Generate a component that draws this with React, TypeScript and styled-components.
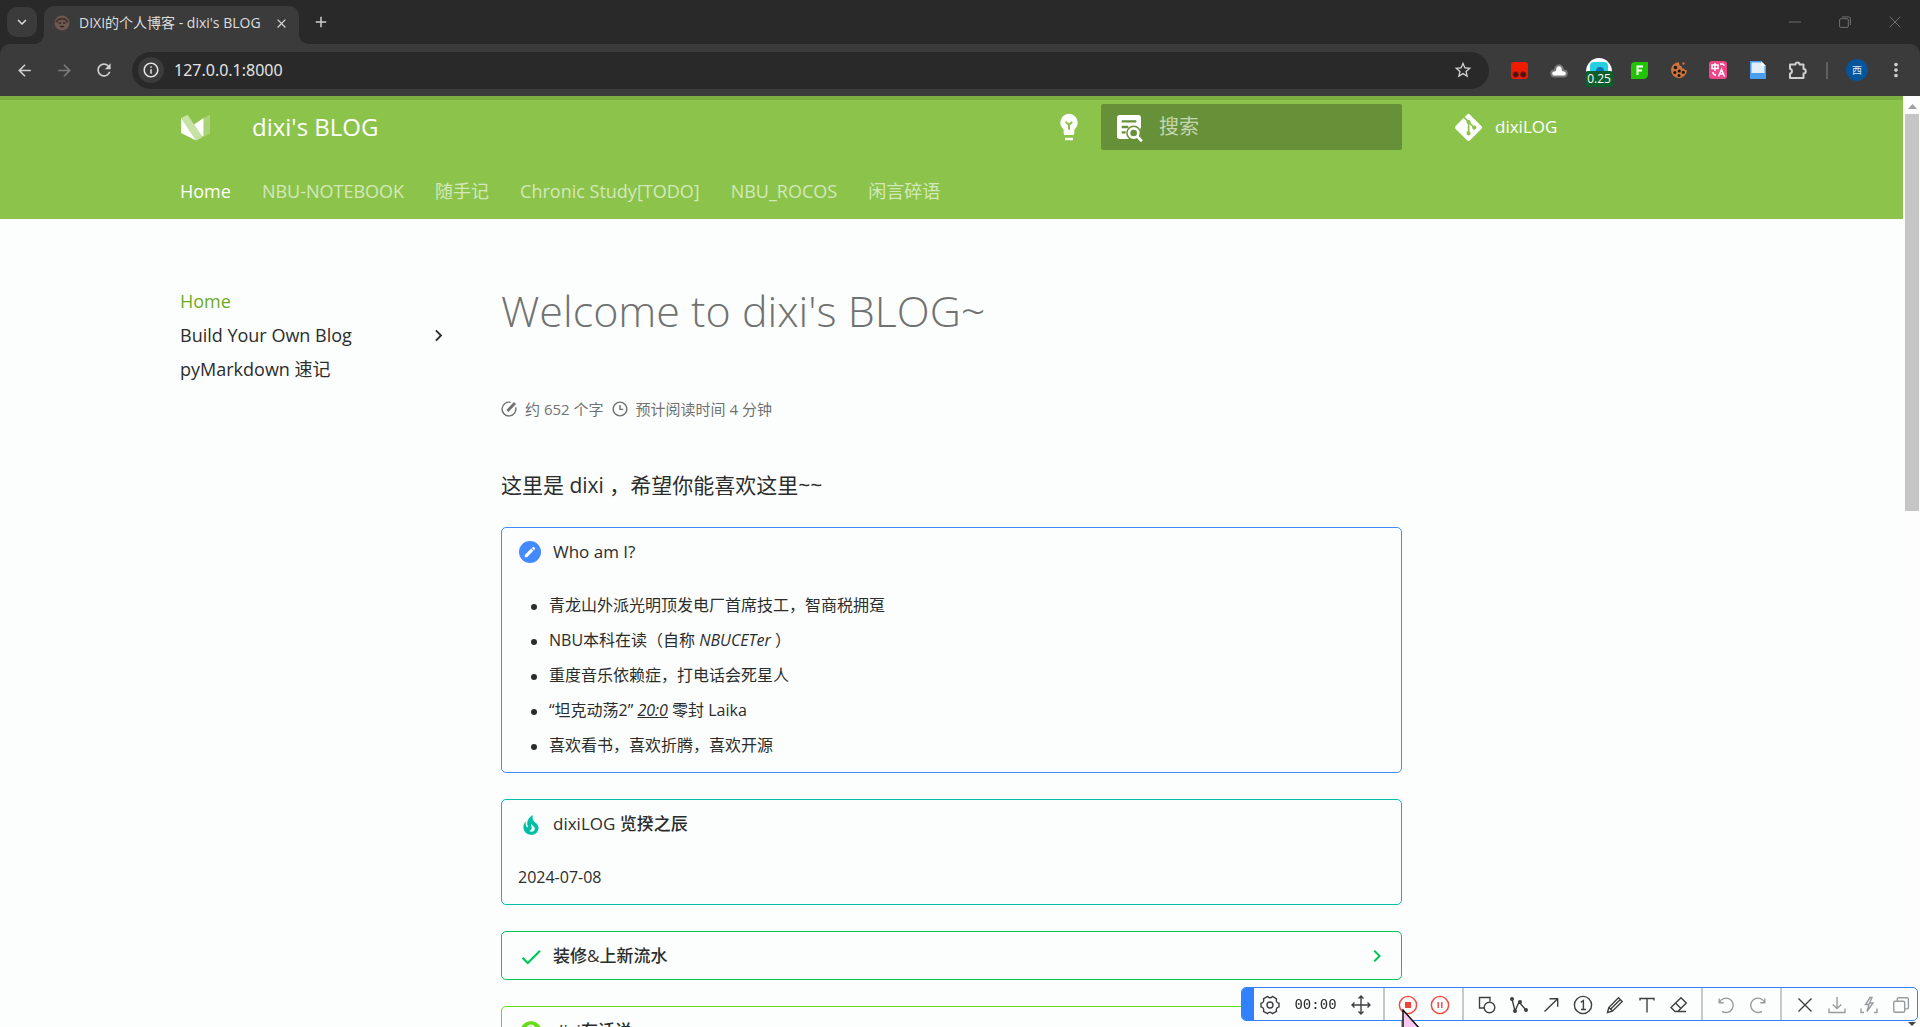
import React from "react";
import styled, { createGlobalStyle } from "styled-components";
import {
  MdArrowBack, MdArrowForward, MdRefresh, MdStarBorder, MdClose, MdAdd, MdExpandMore,
  MdMoreVert, MdChevronRight, MdEdit, MdCheck, MdHelp, MdInfoOutline,
} from "react-icons/md";
import { FaGitAlt } from "react-icons/fa";

const GlobalStyle = createGlobalStyle`
  *, *::before, *::after { box-sizing: border-box; }
  html, body, #root { height: 100%; }
  body {
    margin: 0;
    overflow: hidden;
    background: #fcfefd;
    color: #2b2d2c;
    font-family: "Open Sans", "Noto Sans CJK SC", sans-serif;
    font-size: 16px;
  }
  button, input { font: inherit; color: inherit; border: 0; padding: 0; background: none; }
  a { color: inherit; text-decoration: none; }
  ul, h1, h2, p { margin: 0; padding: 0; font-weight: inherit; }
  svg { display: block; flex: none; }
`;

const Window = styled.div`
  height: 100vh;
  display: flex;
  flex-direction: column;
`;

/* ---------- browser frame ---------- */

const Frame = styled.div`
  flex: none;
  background: #292929;
`;

const TabStrip = styled.div`
  height: 44px;
  display: flex;
  align-items: flex-end;
  padding-left: 7px;
  color: #dedede;
`;

const TabSearch = styled.button`
  width: 30px;
  height: 30px;
  margin-bottom: 7px;
  border-radius: 10px;
  background: #3b3b3b;
  display: grid;
  place-items: center;
`;

const Tab = styled.div`
  position: relative;
  width: 255px;
  height: 38px;
  margin-left: 7px;
  padding: 0 9px 4px 10px;
  border-radius: 10px 10px 0 0;
  background: #3b3b3b;
  display: flex;
  align-items: center;
  gap: 9px;
  &::before, &::after {
    content: "";
    position: absolute;
    bottom: 0;
    width: 10px;
    height: 10px;
  }
  &::before {
    right: 100%;
    background: radial-gradient(circle at 0 0, transparent 10px, #3b3b3b 10px);
  }
  &::after {
    left: 100%;
    background: radial-gradient(circle at 100% 0, transparent 10px, #3b3b3b 10px);
  }
`;

const TabTitle = styled.span`
  flex: 1;
  font-size: 14px;
  line-height: 20px;
  white-space: nowrap;
`;

const FrameButton = styled.button<{ $w: number; $h?: number; $dim?: boolean }>`
  width: ${(p) => p.$w}px;
  height: ${(p) => p.$h ?? 36}px;
  flex: none;
  display: grid;
  place-items: center;
  color: ${(p) => (p.$dim ? "#7d7d7d" : "#cfcfcf")};
`;

const WindowControls = styled.div`
  margin-left: auto;
  align-self: flex-start;
  display: flex;
`;

const Toolbar = styled.div`
  height: 52px;
  padding: 0 6px 0 4px;
  border-radius: 10px 10px 0 0;
  display: flex;
  align-items: center;
  background: #3b3b3b;
`;

const AddressBar = styled.div`
  flex: 1;
  height: 37px;
  margin: 0 10px 0 8px;
  padding: 0 8px 0 6px;
  border-radius: 19px;
  background: #292929;
  display: flex;
  align-items: center;
  gap: 10px;
  color: #e3e3e3;
`;

const SiteInfo = styled.button`
  width: 26px;
  height: 26px;
  border-radius: 50%;
  background: #3b3b3b;
  display: grid;
  place-items: center;
`;

const Address = styled.input`
  flex: 1;
  min-width: 0;
  font-family: "Noto Sans", sans-serif;
  font-size: 16px;
  line-height: 20px;
  outline: 0;
`;

const Extensions = styled.div`
  display: flex;
  align-items: center;
`;

const SpeedBadge = styled.span`
  position: absolute;
  left: 6px;
  bottom: 2px;
  width: 28px;
  border-radius: 3px;
  background: #0f5d2c;
  color: #fff;
  font-size: 12px;
  line-height: 16px;
  text-align: center;
`;

const SpeedButton = styled(FrameButton)`
  position: relative;
`;

const BarDivider = styled.span`
  width: 2px;
  height: 17px;
  margin: 0 8px;
  background: #606060;
`;

const Avatar = styled.span`
  width: 22px;
  height: 22px;
  border-radius: 50%;
  background: #06549b;
  color: #dce9f5;
  font-size: 10px;
  line-height: 22px;
  text-align: center;
`;

/* ---------- page ---------- */

const Viewport = styled.div`
  flex: 1;
  min-height: 0;
  display: flex;
  overflow: hidden;
`;

const Page = styled.div`
  flex: 1;
  min-width: 0;
`;

const ScrollTrack = styled.div`
  width: 17px;
  padding: 8px 1px 0 2px;
  background: #fdfdfd;
  display: flex;
  flex-direction: column;
  align-items: center;
`;

const ScrollThumb = styled.div`
  width: 100%;
  height: 43%;
  margin-top: 5px;
  background: #c5c5c5;
`;

const Header = styled.header`
  border-top: 4px solid #7dae42;
  background: #8cc44b;
  color: #fff;
`;

const Grid = styled.div`
  max-width: 1543px;
  margin: 0 auto;
`;

const HeaderRow = styled(Grid)`
  height: 54px;
  display: flex;
  align-items: center;
`;

const SiteTitle = styled.a`
  flex: 1;
  margin-left: 41px;
  font-size: 24px;
  font-weight: 500;
  line-height: 32px;
`;

const PaletteButton = styled.button`
  width: 64px;
  height: 46px;
  display: grid;
  place-items: center;
  color: #fff;
`;

const SearchBox = styled.label`
  width: 301px;
  height: 46px;
  padding: 0 12px;
  border-radius: 2px;
  background: #679138;
  display: flex;
  align-items: center;
  gap: 14px;
`;

const SearchInput = styled.input`
  flex: 1;
  min-width: 0;
  font-size: 20px;
  line-height: 28px;
  outline: 0;
  &::placeholder { color: #c5d6b0; opacity: 1; }
`;

const Source = styled.a`
  width: 321px;
  padding-left: 51px;
  display: flex;
  align-items: center;
  gap: 11px;
  font-size: 17px;
  line-height: 24px;
`;

const Tabs = styled(Grid).attrs({ as: "nav" })`
  height: 65px;
  padding-top: 8px;
  display: flex;
  align-items: center;
  gap: 31px;
`;

const TabLink = styled.a<{ $active?: boolean }>`
  font-size: 18px;
  line-height: 26px;
  font-weight: ${(p) => (p.$active ? 500 : 400)};
  color: ${(p) => (p.$active ? "#fff" : "#d3e8ba")};
`;

const Body = styled(Grid)`
  display: grid;
  grid-template-columns: 321px minmax(0, 1fr) 321px;
`;

const Sidebar = styled.nav`
  padding: 65px 51px 0 0;
  display: flex;
  flex-direction: column;
`;

const SideLink = styled.a<{ $active?: boolean }>`
  display: flex;
  align-items: center;
  justify-content: space-between;
  font-size: 18px;
  line-height: 34px;
  color: ${(p) => (p.$active ? "#6cab25" : "#2b2d2c")};
`;

const Article = styled.main`
  padding-top: 62px;
`;

const PageTitle = styled.h1`
  font-size: 43px;
  line-height: 60px;
  font-weight: 300;
  color: #707271;
`;

const Meta = styled.p`
  margin-top: 56px;
  display: flex;
  align-items: center;
  gap: 8px;
  font-size: 15px;
  line-height: 24px;
  color: #707271;
`;

const Intro = styled.p`
  margin-top: 48px;
  font-size: 21px;
  line-height: 32px;
`;

const Card = styled.section<{ $color: string }>`
  margin-top: 26px;
  padding: 0 12px 0 16px;
  border: 1px solid ${(p) => p.$color};
  border-radius: 5px;
`;

const CardTitle = styled.h2<{ $color: string }>`
  display: flex;
  align-items: center;
  gap: 11px;
  height: 47px;
  font-size: 17px;
  line-height: 26px;
  font-weight: 500;
  > svg { margin-left: auto; color: ${(p) => p.$color}; }
`;

const TitleIcon = styled.span<{ $color: string }>`
  width: 24px;
  height: 24px;
  color: ${(p) => p.$color};
  display: grid;
  place-items: center;
`;

const TitleDisc = styled.span<{ $color: string }>`
  width: 22px;
  height: 22px;
  border-radius: 50%;
  background: ${(p) => p.$color};
  color: #fff;
  display: grid;
  place-items: center;
`;

const FactList = styled.ul`
  padding: 17px 0 13px 31px;
  line-height: 27px;
  list-style: none;
`;

const Fact = styled.li`
  margin-bottom: 8px;
  &:last-child { margin-bottom: 0; }
  &::before {
    content: "";
    display: inline-block;
    width: 6px;
    height: 6px;
    margin: 0 12px 0 -18px;
    border-radius: 50%;
    background: #2b2d2c;
    vertical-align: middle;
  }
`;

const CardText = styled.p`
  padding: 17px 0 13px;
  line-height: 27px;
`;

/* ---------- screen recorder overlay ---------- */

const Recorder = styled.div`
  position: fixed;
  right: 2px;
  bottom: 6px;
  height: 34px;
  border: 1px solid #2f82fb;
  border-radius: 5px;
  overflow: hidden;
  background: #fcfefd;
  display: flex;
  align-items: center;
`;

const Handle = styled.span`
  width: 12px;
  align-self: stretch;
  background: #2f82fb;
`;

const Tool = styled.button<{ $color?: string }>`
  width: 32px;
  height: 32px;
  padding-top: 1px;
  display: grid;
  place-items: center;
  color: ${(p) => p.$color ?? "#3d4042"};
`;

const Clock = styled.span`
  width: 59px;
  font-family: "DejaVu Sans Mono", monospace;
  font-size: 14px;
  line-height: 20px;
  text-align: center;
`;

const ToolDivider = styled.span`
  width: 2px;
  align-self: stretch;
  margin: 0 7px 0 6px;
  background: #c6c8ca;
`;

const MenuTip = styled.svg`
  position: fixed;
  right: 4px;
  bottom: 1px;
`;

const Pointer = styled.svg`
  position: fixed;
  left: 1402px;
  top: 1009px;
`;

const Stroke = ({ size = 20, width = 1.4, children }: { size?: number; width?: number; children: React.ReactNode }) => (
  <svg width={size} height={size} viewBox="0 0 20 20" fill="none" stroke="currentColor" strokeWidth={width} aria-hidden="true">
    {children}
  </svg>
);

const GREY = "#999c9e";
const RED = "#f4433a";

const toolGroups: { label: string; color?: string; icon: React.ReactNode }[][] = [
  [
    { label: "Stop", color: RED, icon: <><circle cx="10" cy="10" r="8.6" /><rect x="7" y="7" width="6" height="6" fill="currentColor" stroke="none" /></> },
    { label: "Pause", color: RED, icon: <><circle cx="10" cy="10" r="8.6" /><path d="M8.2 7v6M11.8 7v6" /></> },
  ],
  [
    { label: "Shapes", icon: <><path d="M7.5 13H2.5V2.5H13v4" /><circle cx="12.5" cy="12.5" r="5.3" /></> },
    { label: "Polyline", icon: <><path d="M3 4l3 12L10 7l7 8" /><g fill="currentColor"><circle cx="3" cy="4" r="1.3" /><circle cx="6" cy="16" r="1.3" /><circle cx="11" cy="7" r="1.3" /><circle cx="17" cy="15" r="1.3" /></g></> },
    { label: "Arrow", icon: <path d="M3.5 16.5L16.5 4M8.5 3.8h8.2v8" /> },
    { label: "Number", icon: <><circle cx="10" cy="10" r="8.6" /><path d="M7.8 7.4L10.4 5.6V14.5M8 14.5h5" /></> },
    { label: "Pencil", icon: <><path d="M2.5 17.5l1.3-5L13.5 2.8l3.7 3.7-9.8 9.7zM4 12.6l3.3 3.3M5.8 14l9.3-9.2" /></> },
    { label: "Text", icon: <path d="M3 5.5V3.5h14v2M10 3.5V17.5" /> },
    { label: "Eraser", icon: <><path d="M6 16.5l-4-4L12 2.8l5.3 5.3-8.6 8.4zM6.5 8l5.5 5.5M8 16.5h9" /></> },
  ],
  [
    { label: "Undo", color: GREY, icon: <path d="M3.2 3.5v4.3h4.5M3.4 7.5A7.2 7.2 0 1 1 6 16.3" /> },
    { label: "Redo", color: GREY, icon: <path d="M16.8 3.5v4.3h-4.5M16.6 7.5A7.2 7.2 0 1 0 14 16.3" /> },
  ],
  [
    { label: "Close", icon: <path d="M3.5 3.5l13 13M16.5 3.5l-13 13" /> },
    { label: "Save", color: GREY, icon: <path d="M2 13.5v4h16v-4M10 2v11.5M5.7 9.5l4.3 4 4.3-4" /> },
    { label: "Quick save", color: GREY, icon: <path d="M2 13.5v4h3M15 17.5h3v-4M11 2.5L6.5 9.5H10L8 16.5l6-8.5h-3.5l2.5-5.5z" /> },
    { label: "Copy", color: GREY, icon: <><rect x="2.7" y="6.3" width="11" height="11" rx="1.5" /><path d="M6.3 6V4A1.4 1.4 0 0 1 7.7 2.7H16A1.4 1.4 0 0 1 17.4 4v8.5a1.4 1.4 0 0 1-1.4 1.4h-2" /></> },
  ],
];

const tabs = ["Home", "NBU-NOTEBOOK", "随手记", "Chronic Study[TODO]", "NBU_ROCOS", "闲言碎语"];

const BrowserFrame = () => (
  <Frame>
    <TabStrip>
      <TabSearch aria-label="Search tabs"><MdExpandMore size={18} /></TabSearch>
      <Tab>
        <svg width="16" height="16" viewBox="0 0 16 16" aria-hidden="true">
          <circle cx="8" cy="8" r="7.5" fill="#6e5850" />
          <path d="M2.500 7.500c1-5 10-5 11 0" stroke="#473630" strokeWidth="2" fill="none" />
          <path d="M4.500 8h2.500M9 8h2.500M6 11.500h4" stroke="#352b29" strokeWidth="1.300" fill="none" />
        </svg>
        <TabTitle>DIXI的个人博客 - dixi's BLOG</TabTitle>
        <FrameButton $w={18} $h={18} aria-label="Close tab"><MdClose size={15} /></FrameButton>
      </Tab>
      <FrameButton $w={44} $h={44} aria-label="New tab"><MdAdd size={18} /></FrameButton>
      <WindowControls>
        <FrameButton $w={50} $h={43} $dim aria-label="Minimize"><Stroke size={12}><path d="M0 10h20" /></Stroke></FrameButton>
        <FrameButton $w={50} $h={43} $dim aria-label="Restore">
          <Stroke size={12}><rect x="1" y="4.500" width="14.500" height="14.500" rx="2" /><path d="M5 1.500h11a3 3 0 0 1 3 3V15" /></Stroke>
        </FrameButton>
        <FrameButton $w={50} $h={43} $dim aria-label="Close"><Stroke size={12}><path d="M1 1l18 18M19 1L1 19" /></Stroke></FrameButton>
      </WindowControls>
    </TabStrip>
    <Toolbar>
      <FrameButton $w={40} aria-label="Back"><MdArrowBack size={19} /></FrameButton>
      <FrameButton $w={40} $dim aria-label="Forward"><MdArrowForward size={19} /></FrameButton>
      <FrameButton $w={40} aria-label="Reload"><MdRefresh size={20} /></FrameButton>
      <AddressBar>
        <SiteInfo aria-label="Site information"><MdInfoOutline size={18} /></SiteInfo>
        <Address aria-label="Address" defaultValue="127.0.0.1:8000" />
        <FrameButton $w={36} aria-label="Bookmark"><MdStarBorder size={20} /></FrameButton>
      </AddressBar>
      <Extensions>
        <FrameButton $w={40} aria-label="Tampermonkey">
          <svg width="17" height="17" viewBox="0 0 17 17"><rect width="17" height="17" rx="3" fill="#f01c00" /><g fill="#4a120c" stroke="#8a1a0c"><circle cx="4.800" cy="12.500" r="2.800" /><circle cx="12.200" cy="12.500" r="2.800" /></g></svg>
        </FrameButton>
        <FrameButton $w={40} aria-label="Cloud">
          <svg width="18" height="18" viewBox="0 0 18 18"><path d="M4.500 15.500a3 3 0 0 1-.5-6q1 0 1.300-.5a3.800 3.800 0 1 1 7.400 0q.3.500 1.300.5a3 3 0 0 1-.5 6z" fill="#fff" stroke="#777" strokeWidth="2" /></svg>
        </FrameButton>
        <SpeedButton $w={40} $h={38} aria-label="Playback speed">
          <svg width="28" height="32" viewBox="0 0 28 32"><path d="M1 18a13 14 0 0 1 26 0z" fill="#fff" /><path d="M5 18V12q0-4 4-4h10q4 0 4 4v6z" fill="#23cfe0" /><circle cx="15" cy="17" r="4" fill="#0870b4" /></svg>
          <SpeedBadge>0.25</SpeedBadge>
        </SpeedButton>
        <FrameButton $w={40} aria-label="FeHelper">
          <svg width="17" height="17" viewBox="0 0 17 17"><path d="M4 0h13v12q0 5-5 5H0V4q0-4 4-4z" fill="#20c400" /><path d="M6.500 13V4.500h5.500M6.500 8.500h4.500" stroke="#fff" strokeWidth="2" fill="none" /></svg>
        </FrameButton>
        <FrameButton $w={39} aria-label="Cookie editor">
          <svg width="18" height="18" viewBox="0 0 18 18">
            <path d="M9 1.200a8 8 0 1 0 8 8q-2 .5-2.800-1.400-2.500.2-2.400-2.300Q9 5 9 1.200z" fill="#c9733f" />
            <circle cx="13.500" cy="2.500" r="1.200" fill="#c9733f" />
            <g fill="#1d120c"><circle cx="5.500" cy="6.500" r="1.700" /><circle cx="4.800" cy="11.500" r="1.500" /><circle cx="9.300" cy="10" r="1.600" /><circle cx="13.300" cy="11.300" r="1.500" /><circle cx="9" cy="14.500" r="1.500" /></g>
          </svg>
        </FrameButton>
        <FrameButton $w={40} aria-label="Translate">
          <svg width="18" height="18" viewBox="0 0 18 18"><rect width="18" height="18" rx="3" fill="#f0468a" /><g stroke="#fff" strokeWidth="1.500" fill="none"><rect x="3" y="4" width="6" height="3.500" /><path d="M6 2v8M9.500 15.500l3-7 3 7M10.500 13h4M4 11q0 3 3 3M11 3h2q2 0 2 2" /></g></svg>
        </FrameButton>
        <FrameButton $w={40} aria-label="Notes">
          <svg width="16" height="18" viewBox="0 0 16 18"><path d="M0 0h11l5 5v13H0z" fill="#4a9ff0" /><path d="M1.500 1.500h9l4 4V12h-13z" fill="#e2eff9" /><path d="M11 0v5h5z" fill="#fff" /></svg>
        </FrameButton>
        <FrameButton $w={40} aria-label="Extensions">
          <Stroke size={20} width={2}><path d="M2 4.500h5.500a1.500 1.500 0 0 1 4 0H15.500V9a1.500 1.500 0 0 1 0 4.500V18H2v-4.500a2.400 2.400 0 0 0 0-4.700z" strokeLinejoin="round" /></Stroke>
        </FrameButton>
        <BarDivider />
        <FrameButton $w={42} aria-label="Profile"><Avatar>西</Avatar></FrameButton>
        <FrameButton $w={36} aria-label="Menu"><MdMoreVert size={22} /></FrameButton>
      </Extensions>
    </Toolbar>
  </Frame>
);

const SiteHeader = () => (
  <Header>
    <HeaderRow>
      <svg width="31" height="31" viewBox="0 0 89 89" fill="#fff" aria-hidden="true">
        <path d="M3.136 17.387v42.932l42.932 21.467z" />
        <path d="M21.910 8l42.933 64.398-18.775 9.388L3.136 17.387z" fillOpacity=".5" />
        <path d="M67.535 17.387L40.273 35.543l21.878 32.818 5.384 2.691z" />
        <path d="M67.535 17.387v53.666l18.774-9.388V8z" fillOpacity=".25" />
      </svg>
      <SiteTitle href="#">dixi's BLOG</SiteTitle>
      <PaletteButton aria-label="Toggle palette">
        <svg width="32" height="32" viewBox="0 0 24 24" fill="currentColor">
          <path d="M12 2a6.800 6.800 0 0 0-4 12V17a1 1 0 0 0 1 1h6a1 1 0 0 0 1-1v-3a6.800 6.800 0 0 0-4-12zM9 20h6v2H9z" />
          <path d="M9.500 8.200l2.500 2 2.500-2M12 10v4" stroke="#8cc44b" strokeWidth="1.500" fill="none" />
        </svg>
      </PaletteButton>
      <SearchBox>
        <svg width="32" height="32" viewBox="0 0 24 24" aria-hidden="true">
          <rect x="3" y="3" width="18" height="18" rx="2" fill="#fff" />
          <path d="M6.500 7.700h11M6.500 12h5M6.500 16h3" stroke="#679138" strokeWidth="1.700" />
          <path d="M13 21.500h9v-9" stroke="#679138" strokeWidth="3" fill="none" />
          <circle cx="15.500" cy="16.500" r="5.600" fill="#679138" />
          <circle cx="15.500" cy="16.500" r="3.500" stroke="#fff" strokeWidth="2" fill="none" />
          <path d="M18 19l3.700 3.700" stroke="#fff" strokeWidth="2" />
        </svg>
        <SearchInput aria-label="搜索" placeholder="搜索" />
      </SearchBox>
      <Source href="#"><FaGitAlt size={31} />dixiLOG</Source>
    </HeaderRow>
    <Tabs>
      {tabs.map((t, i) => <TabLink key={t} href="#" $active={i === 0}>{t}</TabLink>)}
    </Tabs>
  </Header>
);

const BLUE = "#448aff";
const TEAL = "#00bfa5";
const GREEN = "#00c853";
const LIME = "#64dd17";

const Flame = () => (
  <svg width="26" height="26" viewBox="0 0 24 24" fill="currentColor" aria-hidden="true">
    <path d="M17.660 11.200c-.23-.3-.51-.56-.77-.82-.67-.6-1.430-1.030-2.070-1.660C13.330 7.260 13 4.850 13.950 3c-.95.23-1.780.75-2.490 1.320-2.590 2.080-3.610 5.750-2.390 8.900.04.1.08.2.08.33 0 .22-.15.42-.35.5-.23.1-.47.04-.66-.12a.58.58 0 0 1-.14-.17c-1.130-1.430-1.310-3.480-.55-5.120C5.780 10 4.870 12.300 5 14.470c.06.5.12 1 .29 1.500.14.6.41 1.200.71 1.730 1.080 1.730 2.950 2.970 4.960 3.220 2.140.27 4.430-.12 6.070-1.600 1.830-1.660 2.470-4.320 1.530-6.600l-.13-.26c-.21-.46-.77-1.260-.77-1.260m-3.160 6.300c-.28.24-.74.5-1.100.6-1.120.4-2.240-.16-2.900-.82 1.190-.28 1.900-1.160 2.110-2.050.17-.8-.15-1.460-.28-2.230-.12-.74-.1-1.370.17-2.060.19.38.39.76.63 1.060.77 1 1.980 1.440 2.240 2.800.04.14.06.28.06.43.03.82-.33 1.720-.93 2.270" />
  </svg>
);

const Content = () => (
  <Body>
    <Sidebar>
      <SideLink href="#" $active>Home</SideLink>
      <SideLink href="#">Build Your Own Blog<MdChevronRight size={23} /></SideLink>
      <SideLink href="#">pyMarkdown 速记</SideLink>
    </Sidebar>
    <Article>
      <PageTitle>Welcome to dixi's BLOG~</PageTitle>
      <Meta>
        <Stroke size={16} width={1.8}><path d="M12 1.700A8.600 8.600 0 1 0 18.300 8" /><path d="M8 12.500l9.500-10" strokeWidth="3.600" /></Stroke>
        约 652 个字
        <Stroke size={16} width={1.8}><circle cx="10" cy="10" r="8.600" /><path d="M10 5v5.500h4" /></Stroke>
        预计阅读时间 4 分钟
      </Meta>
      <Intro>这里是 dixi ，希望你能喜欢这里~~</Intro>
      <Card $color={BLUE}>
        <CardTitle $color={BLUE}>
          <TitleIcon $color={BLUE}><TitleDisc $color={BLUE}><MdEdit size={14} /></TitleDisc></TitleIcon>
          Who am I?
        </CardTitle>
        <FactList>
          <Fact>青龙山外派光明顶发电厂首席技工，智商税拥趸</Fact>
          <Fact>NBU本科在读（自称 <em>NBUCETer</em> ）</Fact>
          <Fact>重度音乐依赖症，打电话会死星人</Fact>
          <Fact>“坦克动荡2” <em><u>20:0</u></em> 零封 Laika</Fact>
          <Fact>喜欢看书，喜欢折腾，喜欢开源</Fact>
        </FactList>
      </Card>
      <Card $color={TEAL}>
        <CardTitle $color={TEAL}>
          <TitleIcon $color={TEAL}><Flame /></TitleIcon>
          dixiLOG 览揆之辰
        </CardTitle>
        <CardText>2024-07-08</CardText>
      </Card>
      <Card $color={GREEN}>
        <CardTitle $color={GREEN}>
          <TitleIcon $color={GREEN}><MdCheck size={26} /></TitleIcon>
          装修&amp;上新流水
          <MdChevronRight size={24} />
        </CardTitle>
      </Card>
      <Card $color={LIME}>
        <CardTitle $color={LIME}>
          <TitleIcon $color={LIME}><MdHelp size={26} /></TitleIcon>
          dixi有话说
        </CardTitle>
      </Card>
    </Article>
  </Body>
);

const RecorderBar = () => (
  <>
    <Recorder>
      <Handle />
      <Tool aria-label="Settings">
        <Stroke><path d="M7.500 1.500q2.500 2.600 5 0l4 2.300q-1 3.700 2.500 4.500v3.600q-3.500.8-2.500 4.400l-4 2.300q-2.500-2.600-5 0l-4-2.300q1-3.600-2.500-4.400V8.300q3.500-.8 2.500-4.500z" /><circle cx="10" cy="10" r="3" /></Stroke>
      </Tool>
      <Clock>00:00</Clock>
      <Tool aria-label="Move">
        <Stroke><path d="M10 1v18M1 10h18M7.500 3.500L10 1l2.500 2.500M7.500 16.500L10 19l2.500-2.500M3.500 7.500L1 10l2.500 2.500M16.500 7.500L19 10l-2.500 2.500" /></Stroke>
      </Tool>
      {toolGroups.map((group) => (
        <React.Fragment key={group[0].label}>
          <ToolDivider />
          {group.map((t) => (
            <Tool key={t.label} aria-label={t.label} $color={t.color}><Stroke>{t.icon}</Stroke></Tool>
          ))}
        </React.Fragment>
      ))}
    </Recorder>
    <MenuTip width="8" height="4" viewBox="0 0 8 4"><path d="M0 0h8L4 4z" fill="#444" /></MenuTip>
    <Pointer width="20" height="26" viewBox="0 0 20 26"><path d="M1 1v24l6-5h11z" fill="#f8c8f0" stroke="#111" strokeWidth="1.500" /></Pointer>
  </>
);

export default function App() {
  return (
    <Window>
      <GlobalStyle />
      <BrowserFrame />
      <Viewport>
        <Page>
          <SiteHeader />
          <Content />
        </Page>
        <ScrollTrack>
          <svg width="9" height="5" viewBox="0 0 9 5" aria-hidden="true"><path d="M0 5L4.500 0 9 5z" fill="#a0a0a0" /></svg>
          <ScrollThumb />
        </ScrollTrack>
      </Viewport>
      <RecorderBar />
    </Window>
  );
}
